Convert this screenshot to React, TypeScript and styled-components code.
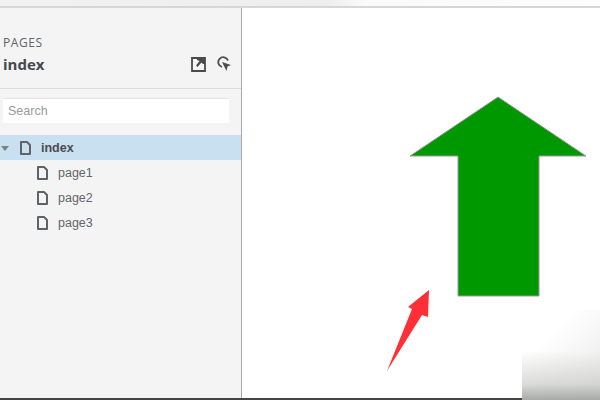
import React from "react";
import styled, { createGlobalStyle } from "styled-components";

const Global = createGlobalStyle`
  html, body { margin: 0; padding: 0; width: 600px; height: 400px; overflow: hidden; background: #fff; }
  #root { width: 600px; height: 400px; }
`;

const Page = styled.div`
  position: relative;
  width: 600px;
  height: 400px;
  display: flex;
  flex-direction: column;
  overflow: hidden;
  font-family: "Liberation Sans", Arial, sans-serif;
`;

const TopStrip = styled.div`
  height: 6px;
  flex: none;
  background: linear-gradient(90deg, #f1f1f1 0, #f1f1f1 50px, #eeeeee 330px, #fafafa 365px, #fdfdfd 100%);
  border-bottom: 2px solid #d6d6d6;
`;

const Body = styled.div`
  flex: 1;
  display: flex;
  min-height: 0;
`;

const Sidebar = styled.aside`
  width: 241px;
  flex: none;
  background: #f4f4f4;
  border-right: 1px solid #a9a9a9;
  display: flex;
  flex-direction: column;
`;

const Header = styled.header`
  height: 81px;
  flex: none;
  box-sizing: border-box;
  padding: 28px 10px 0 3px;
  border-bottom: 1px solid #dcdcdc;
`;

const Label = styled.div`
  font-family: "Open Sans", sans-serif;
  font-size: 12px;
  line-height: 14px;
  letter-spacing: 0.6px;
  color: #60636b;
`;

const TitleRow = styled.div`
  display: flex;
  align-items: center;
  justify-content: space-between;
  margin-top: 5px;
  height: 18px;
`;

const Title = styled.div`
  font-family: "Open Sans", sans-serif;
  font-weight: 700;
  font-size: 15px;
  line-height: 18px;
  color: #45484d;
`;

const Tools = styled.div`
  display: flex;
  gap: 10px;
  align-items: center;
`;

const SearchBox = styled.div`
  margin: 9px 12px 0 3px;
  height: 25px;
  box-sizing: border-box;
  background: #fff;
  border-top: 1px solid #e4e4e4;
  padding-left: 5px;
  font-size: 12.500px;
  line-height: 24px;
  color: #9b9b9b;
`;

const Tree = styled.div`
  margin-top: 12px;
  display: flex;
  flex-direction: column;
`;

const Row = styled.div<{ $selected?: boolean; $child?: boolean }>`
  height: 25px;
  display: flex;
  align-items: center;
  box-sizing: border-box;
  padding: 1px 0 0 ${(p) => (p.$child ? "37px" : "0")};
  background: ${(p) => (p.$selected ? "#c9e0f0" : "transparent")};
  font-size: 12.500px;
  font-weight: ${(p) => (p.$selected ? 700 : 400)};
  color: ${(p) => (p.$selected ? "#4a4d52" : "#63666b")};
`;

const Caret = styled.span`
  width: 0;
  height: 0;
  margin: 0 11px 0 1px;
  border-left: 4.5px solid transparent;
  border-right: 4.5px solid transparent;
  border-top: 5px solid #7d8185;
`;

const RowIcon = styled.svg`
  width: 11px;
  height: 14px;
  flex: none;
  margin-right: 10px;
  fill: none;
  stroke: #5f6266;
  stroke-width: 2;
`;

const Canvas = styled.main`
  position: relative;
  flex: 1;
  background: #fff;
`;

const Drawing = styled.svg`
  position: absolute;
  left: 0;
  top: 0;
  width: 358px;
  height: 390px;
`;

const BottomBar = styled.div`
  position: absolute;
  left: 0;
  bottom: 0;
  width: 522px;
  height: 2px;
  background: #454545;
`;

const Corner = styled.div`
  position: absolute;
  right: 0;
  bottom: 0;
  width: 78px;
  height: 90px;
  background:
    linear-gradient(180deg, rgba(255,255,255,0) 45%, rgba(190,192,188,0.5) 82%, #a8aaa6 100%),
    linear-gradient(315deg, #e8e8e8 0, #ffffff 70%);
`;

const Doc = () => (
  <RowIcon viewBox="0 0 11 14">
    <path d="M1 1h6l3 3v9H1z" strokeLinejoin="round" />
  </RowIcon>
);

export default function App() {
  return (
    <Page>
      <Global />
      <TopStrip />
      <Body>
        <Sidebar>
          <Header>
            <Label>PAGES</Label>
            <TitleRow>
              <Title>index</Title>
              <Tools>
                <svg width="15" height="15" viewBox="0 0 15 15">
                  <path d="M1 1h13v13H1z" fill="none" stroke="#4a4a4a" strokeWidth="1.8" />
                  <path d="M6 1h8v6h-2L10.500 5.500 6.500 10 5 8.500 8.500 4 6 3z" fill="#4a4a4a" />
                </svg>
                <svg width="15" height="16" viewBox="0 0 15 16">
                  <path d="M12 4.500A5 5 0 1 0 6 11" fill="none" stroke="#4f4f4f" strokeWidth="1.800" />
                  <path d="M6 6l9 3-3.500 1.500L10.500 15z" fill="#4f4f4f" />
                </svg>
              </Tools>
            </TitleRow>
          </Header>
          <SearchBox>Search</SearchBox>
          <Tree>
            <Row $selected>
              <Caret />
              <Doc />
              index
            </Row>
            <Row $child><Doc />page1</Row>
            <Row $child><Doc />page2</Row>
            <Row $child><Doc />page3</Row>
          </Tree>
        </Sidebar>
        <Canvas>
          <Drawing viewBox="242 8 358 390">
            <path
              d="M498 97L586 156H539V296H458V156H410Z"
              fill="#009800"
              stroke="#9a9a9a"
              strokeWidth="1"
              strokeLinejoin="miter"
            />
            <path d="M429 290L408 307 412 309 387 371 422 315 428 317Z" fill="#ff2f37" />
          </Drawing>
        </Canvas>
      </Body>
      <Corner />
      <BottomBar />
    </Page>
  );
}
